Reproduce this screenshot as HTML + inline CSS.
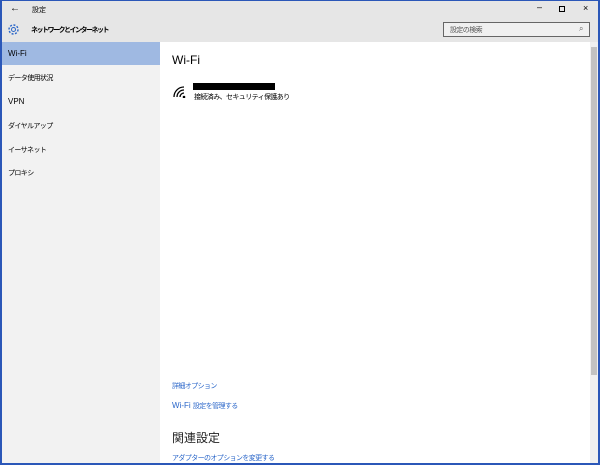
<!DOCTYPE html>
<html><head><meta charset="utf-8"><style>
*{margin:0;padding:0;box-sizing:border-box}
body{width:600px;height:465px;overflow:hidden;background:#fff;font-family:"Liberation Sans","Noto Sans CJK JP",sans-serif;font-size:8px;color:#000;position:relative}
.frame{position:absolute;inset:0;border:2px solid #2b57b8;border-top:1px solid #2b57b8}
.t{position:absolute;white-space:nowrap}
.j{font-size:7px;letter-spacing:-0.6px}
.link{color:#2a66c9}
</style></head><body>
<div style="position:absolute;left:0;top:0;width:600px;height:42px;background:#e6e6e6"></div>
<div style="position:absolute;left:0;top:42px;width:160px;height:423px;background:#f2f2f2"></div>
<div style="position:absolute;left:0;top:42px;width:160px;height:23px;background:#9fb9e2"></div>
<div style="position:absolute;left:590px;top:42px;width:8px;height:423px;background:#f0f0f0"></div>
<div style="position:absolute;left:591px;top:47px;width:6px;height:328px;background:#c2c2c2"></div>
<div class="t" style="left:10px;top:3px;font-size:10px">←</div>
<div class="t" style="left:32px;top:5px;font-size:7px">設定</div>
<div class="t" style="left:537px;top:2px;font-size:9px">–</div>
<div style="position:absolute;left:559px;top:6px;width:6px;height:6px;border:1px solid #000"></div>
<div class="t" style="left:583px;top:3px;font-size:9px">×</div>
<svg style="position:absolute;left:7px;top:23px" width="13" height="13" viewBox="0 0 13 13"><circle cx="6.5" cy="6.5" r="4.5" fill="none" stroke="#2a66c9" stroke-width="1.4" stroke-dasharray="2 1.5"/><circle cx="6.5" cy="6.5" r="2" fill="none" stroke="#2a66c9" stroke-width="1"/></svg>
<div class="t" style="left:31px;top:25px;font-size:7px;letter-spacing:-1.5px;font-weight:bold">ネットワークとインターネット</div>
<div style="position:absolute;left:443px;top:22px;width:147px;height:15px;border:1px solid #666;background:#f0f0f0"></div>
<div class="t j" style="left:450px;top:25px;color:#555">設定の検索</div>
<div class="t" style="left:579px;top:24px;font-size:8px;color:#666">⌕</div>
<div class="t" style="left:8px;top:49px">Wi-Fi</div>
<div class="t j" style="left:8px;top:73px">データ使用状況</div>
<div class="t" style="left:8px;top:97px">VPN</div>
<div class="t j" style="left:8px;top:121px">ダイヤルアップ</div>
<div class="t j" style="left:8px;top:145px">イーサネット</div>
<div class="t j" style="left:8px;top:168px">プロキシ</div>
<div class="t" style="left:172px;top:53px;font-size:12px">Wi-Fi</div>
<svg style="position:absolute;left:173px;top:86px" width="14" height="12" viewBox="0 0 14 12"><g fill="none" stroke="#000" stroke-width="1.3"><path d="M1 11 A10 10 0 0 1 11 1"/><path d="M4 11 A7 7 0 0 1 11 4"/><path d="M7 11 A4 4 0 0 1 11 7"/></g><circle cx="11" cy="11" r="1.3"/></svg>
<div style="position:absolute;left:193px;top:83px;width:82px;height:7px;background:#000"></div>
<div class="t j" style="left:194px;top:92px">接続済み、セキュリティ保護あり</div>
<div class="t link j" style="left:172px;top:381px">詳細オプション</div>
<div class="t link" style="left:172px;top:401px">Wi-Fi <span class="j">設定を管理する</span></div>
<div class="t" style="left:172px;top:429px;font-size:12px;color:#222">関連設定</div>
<div class="t link j" style="left:172px;top:453px">アダプターのオプションを変更する</div>
<div class="frame"></div>
</body></html>
